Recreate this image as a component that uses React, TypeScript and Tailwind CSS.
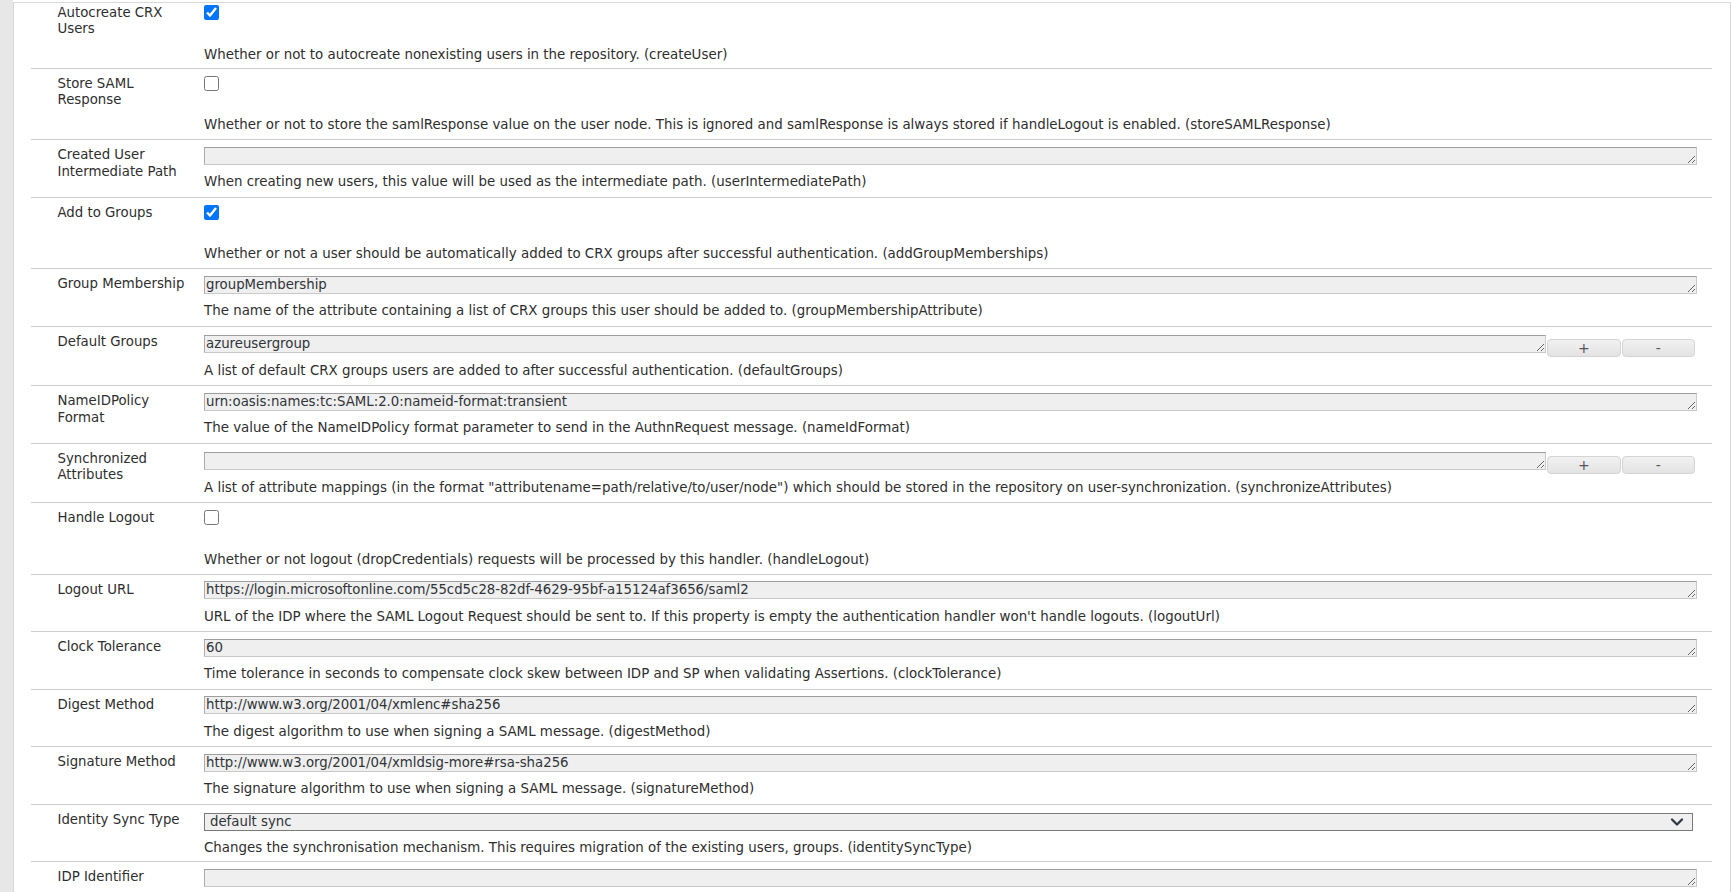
import React from 'react';
import { ChevronDown } from 'lucide-react';

type Field =
  | { kind: 'check'; checked: boolean }
  | { kind: 'text'; value: string }
  | { kind: 'multi'; value: string }
  | { kind: 'select'; value: string };

interface ConfigProp {
  label: string;
  field: Field;
  desc?: string;
}

// properties of the SAML authentication handler, in the order the console lists them
const configProps: ConfigProp[] = [
  {
    label: 'Autocreate CRX Users',
    field: { kind: 'check', checked: true },
    desc: 'Whether or not to autocreate nonexisting users in the repository. (createUser)',
  },
  {
    label: 'Store SAML Response',
    field: { kind: 'check', checked: false },
    desc: 'Whether or not to store the samlResponse value on the user node. This is ignored and samlResponse is always stored if handleLogout is enabled. (storeSAMLResponse)',
  },
  {
    label: 'Created User Intermediate Path',
    field: { kind: 'text', value: '' },
    desc: 'When creating new users, this value will be used as the intermediate path. (userIntermediatePath)',
  },
  {
    label: 'Add to Groups',
    field: { kind: 'check', checked: true },
    desc: 'Whether or not a user should be automatically added to CRX groups after successful authentication. (addGroupMemberships)',
  },
  {
    label: 'Group Membership',
    field: { kind: 'text', value: 'groupMembership' },
    desc: 'The name of the attribute containing a list of CRX groups this user should be added to. (groupMembershipAttribute)',
  },
  {
    label: 'Default Groups',
    field: { kind: 'multi', value: 'azureusergroup' },
    desc: 'A list of default CRX groups users are added to after successful authentication. (defaultGroups)',
  },
  {
    label: 'NameIDPolicy Format',
    field: { kind: 'text', value: 'urn:oasis:names:tc:SAML:2.0:nameid-format:transient' },
    desc: 'The value of the NameIDPolicy format parameter to send in the AuthnRequest message. (nameIdFormat)',
  },
  {
    label: 'Synchronized Attributes',
    field: { kind: 'multi', value: '' },
    desc: 'A list of attribute mappings (in the format "attributename=path/relative/to/user/node") which should be stored in the repository on user-synchronization. (synchronizeAttributes)',
  },
  {
    label: 'Handle Logout',
    field: { kind: 'check', checked: false },
    desc: 'Whether or not logout (dropCredentials) requests will be processed by this handler. (handleLogout)',
  },
  {
    label: 'Logout URL',
    field: { kind: 'text', value: 'https://login.microsoftonline.com/55cd5c28-82df-4629-95bf-a15124af3656/saml2' },
    desc: "URL of the IDP where the SAML Logout Request should be sent to. If this property is empty the authentication handler won't handle logouts. (logoutUrl)",
  },
  {
    label: 'Clock Tolerance',
    field: { kind: 'text', value: '60' },
    desc: 'Time tolerance in seconds to compensate clock skew between IDP and SP when validating Assertions. (clockTolerance)',
  },
  {
    label: 'Digest Method',
    field: { kind: 'text', value: 'http://www.w3.org/2001/04/xmlenc#sha256' },
    desc: 'The digest algorithm to use when signing a SAML message. (digestMethod)',
  },
  {
    label: 'Signature Method',
    field: { kind: 'text', value: 'http://www.w3.org/2001/04/xmldsig-more#rsa-sha256' },
    desc: 'The signature algorithm to use when signing a SAML message. (signatureMethod)',
  },
  {
    label: 'Identity Sync Type',
    field: { kind: 'select', value: 'default sync' },
    desc: 'Changes the synchronisation mechanism. This requires migration of the existing users, groups. (identitySyncType)',
  },
  {
    label: 'IDP Identifier',
    field: { kind: 'text', value: '' },
  },
];

function TextBox({ value }: { value: string }) {
  return (
    <textarea
      rows={1}
      readOnly
      value={value}
      className="block w-full h-[18px] overflow-hidden bg-[#efefef] border border-[#c9c9c9] border-t-[#9d9d9d] border-l-[#ababab] pl-[1px] py-0 text-[13.3px] leading-[16px] text-[#2f3438] outline-none"
    />
  );
}

function SmallButton({ children }: { children: React.ReactNode }) {
  return (
    <button className="w-[73.5px] h-[18px] mt-[4.5px] ml-[1px] rounded-[4px] border border-[#d4d4d4] bg-gradient-to-b from-[#f1f1f1] to-[#e3e3e3] text-[14px] leading-[16px] text-[#555]">
      {children}
    </button>
  );
}

function PropRow({ p, first }: { p: ConfigProp; first?: boolean }) {
  const f = p.field;
  const kind = f.kind;

  // padding picked per field type so the rows land on the same lines as the console
  let fieldPad = 'pt-[6.5px] pb-[6.5px]';
  if (kind === 'check') fieldPad = first ? 'pt-[2px] pb-[5px]' : 'pt-[7px] pb-[6px]';
  if (kind === 'multi') fieldPad = 'pt-[8px] pb-[6.5px]';
  if (kind === 'select') fieldPad = 'pt-[8px] pb-[5.5px]';

  let descGap = 'mt-[8.5px]';
  if (kind === 'check') descGap = 'mt-[25.5px]';
  if (kind === 'multi') descGap = 'mt-[4.5px]';
  if (kind === 'select') descGap = 'mt-[8px]';

  return (
    <div className="flex border-b border-[#cdcdcd]">
      <div className={`w-[173px] shrink-0 pl-[26.5px] pr-[8px] text-[13.3px] leading-[16.5px] ${first ? 'pt-[1.5px]' : 'pt-[7px]'}`}>
        {p.label}
      </div>
      <div className={`flex-1 pr-[15px] ${fieldPad}`}>
        {kind === 'check' && (
          <input
            type="checkbox"
            readOnly
            checked={f.checked}
            className="block w-[15px] h-[15px] m-0"
          />
        )}
        {kind === 'text' && <TextBox value={f.value} />}
        {kind === 'multi' && (
          <div className="flex items-start pr-[1.5px]">
            <div className="flex-1">
              <TextBox value={f.value} />
            </div>
            <SmallButton>+</SmallButton>
            <SmallButton>-</SmallButton>
          </div>
        )}
        {kind === 'select' && (
          <div className="flex items-center h-[18px] mr-[3.5px] bg-[#efefef] border border-[#7a7a7a] pl-[5px] pr-[5px] text-[13.3px] leading-[16px] text-[#2f3438]">
            <span className="flex-1">{f.value}</span>
            <ChevronDown size={20} strokeWidth={2.8} className="text-[#2b3a47]" />
          </div>
        )}
        {p.desc && (
          <div className={`text-[13.4px] leading-[17px] whitespace-nowrap ${descGap}`}>{p.desc}</div>
        )}
      </div>
    </div>
  );
}

export default function App() {
  return (
    <div className="flex h-screen overflow-hidden bg-white text-[13.2px] text-[#2e2e2e] font-['DejaVu_Sans',Verdana,sans-serif]">
      {/* left gutter */}
      <div className="w-[13px] shrink-0 bg-[#e7e7e7]" />

      <div className="flex-1 pt-[2px] pr-[1.5px]">
        <div className="h-full border border-b-0 border-[#d8d8d8] pl-[17px] pr-[18px]">
          {configProps.map((p, i) => (
            <PropRow key={p.label} p={p} first={i === 0} />
          ))}
        </div>
      </div>
    </div>
  );
}
